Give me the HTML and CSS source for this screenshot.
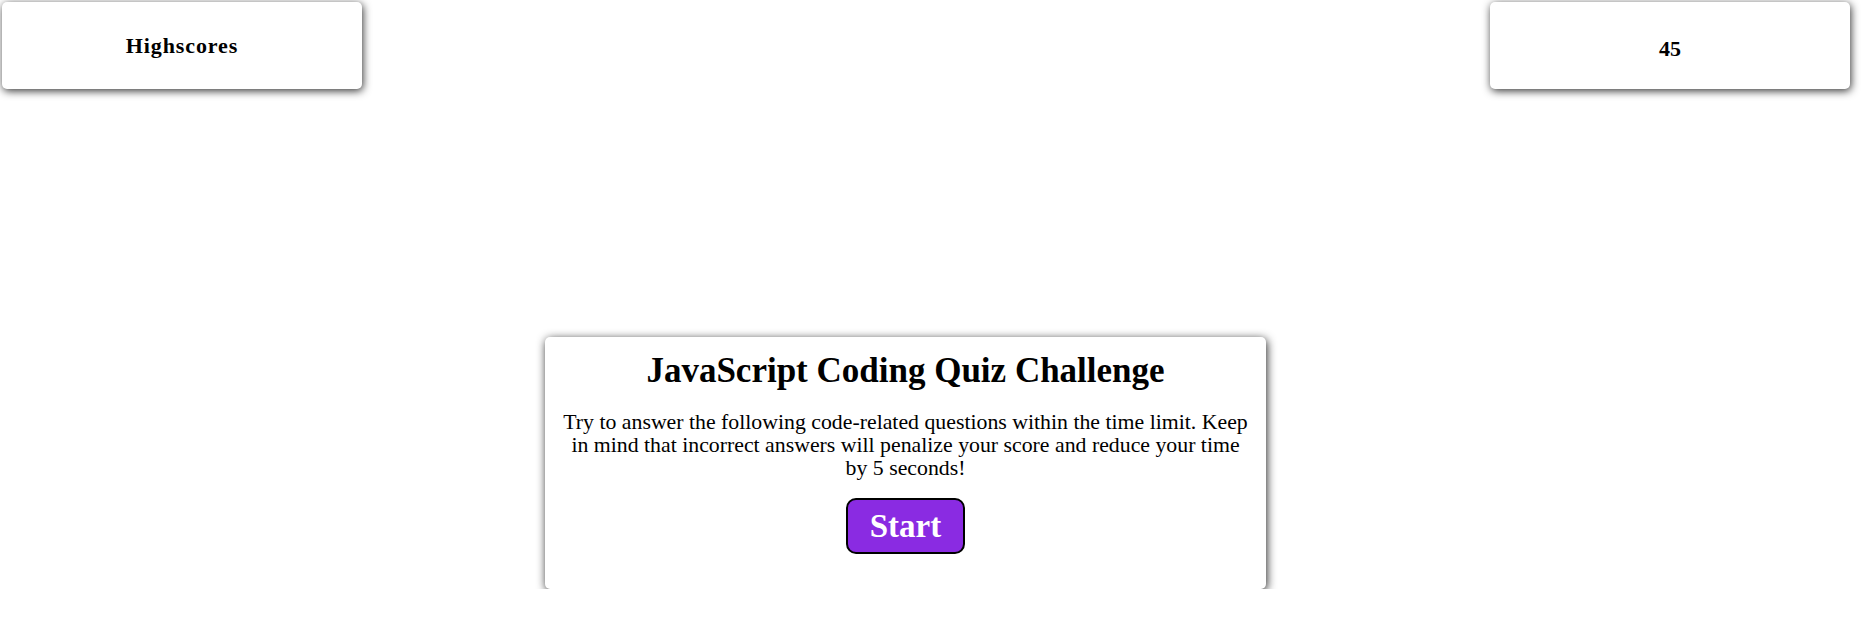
FILE: index.html
```html
<!DOCTYPE html>
<html lang="en">
<head>
<meta charset="utf-8">
<title>JavaScript Coding Quiz Challenge</title>
<link rel="stylesheet" href="styles.css">
</head>
<body>
<header class="top-bar">
  <a class="box box-scores" href="#"><h3 class="box-label">Highscores</h3></a>
  <div class="box box-timer"><span class="timer-value">45</span></div>
</header>
<main class="stage">
  <section class="card">
    <h1 class="card-title">JavaScript Coding Quiz Challenge</h1>
    <p class="card-text">Try to answer the following code-related questions within the time limit. Keep in mind that incorrect answers will penalize your score and reduce your time by 5 seconds!</p>
    <button class="start-btn" type="button">Start</button>
  </section>
</main>
</body>
</html>
```

FILE: styles.css
```css
* { box-sizing: border-box; }

body {
  margin: 0;
  background: #fff;
  color: #000;
  font-family: "Liberation Serif", "Times New Roman", serif;
}

.top-bar {
  display: flex;
  justify-content: space-between;
  padding: 2px 12px 0 2px;
}

.box {
  width: 360px;
  height: 87px;
  border-radius: 5px;
  background: #fff;
  box-shadow: 1px 2px 9px rgba(0, 0, 0, 0.8);
  display: flex;
  align-items: center;
  justify-content: center;
  color: #000;
  text-decoration: none;
}

.box-label {
  margin: 0;
  font-size: 22px;
  letter-spacing: 0.9px;
  font-weight: bold;
}

.timer-value {
  font-size: 22px;
  font-weight: bold;
  padding-top: 6px;
}

.stage {
  display: flex;
  padding: 248px 0 0 545px;
}

.card {
  width: 721px;
  height: 252px;
  padding: 0 16px;
  border-radius: 5px;
  background: #fff;
  box-shadow: 1px 2px 10px rgba(0, 0, 0, 0.85);
  display: flex;
  flex-direction: column;
  align-items: center;
  text-align: center;
}

.card-title {
  margin: 14px 0 0;
  font-size: 35px;
  line-height: 40px;
  font-weight: bold;
}

.card-text {
  margin: 20px 0 0;
  font-size: 21.8px;
  line-height: 23px;
}

.start-btn {
  margin-top: 18px;
  height: 56px;
  padding: 0 22px;
  border: 2px solid #000;
  border-radius: 10px;
  background: #8a2be2;
  color: #fff;
  font-family: inherit;
  font-size: 33px;
  font-weight: bold;
}
```
